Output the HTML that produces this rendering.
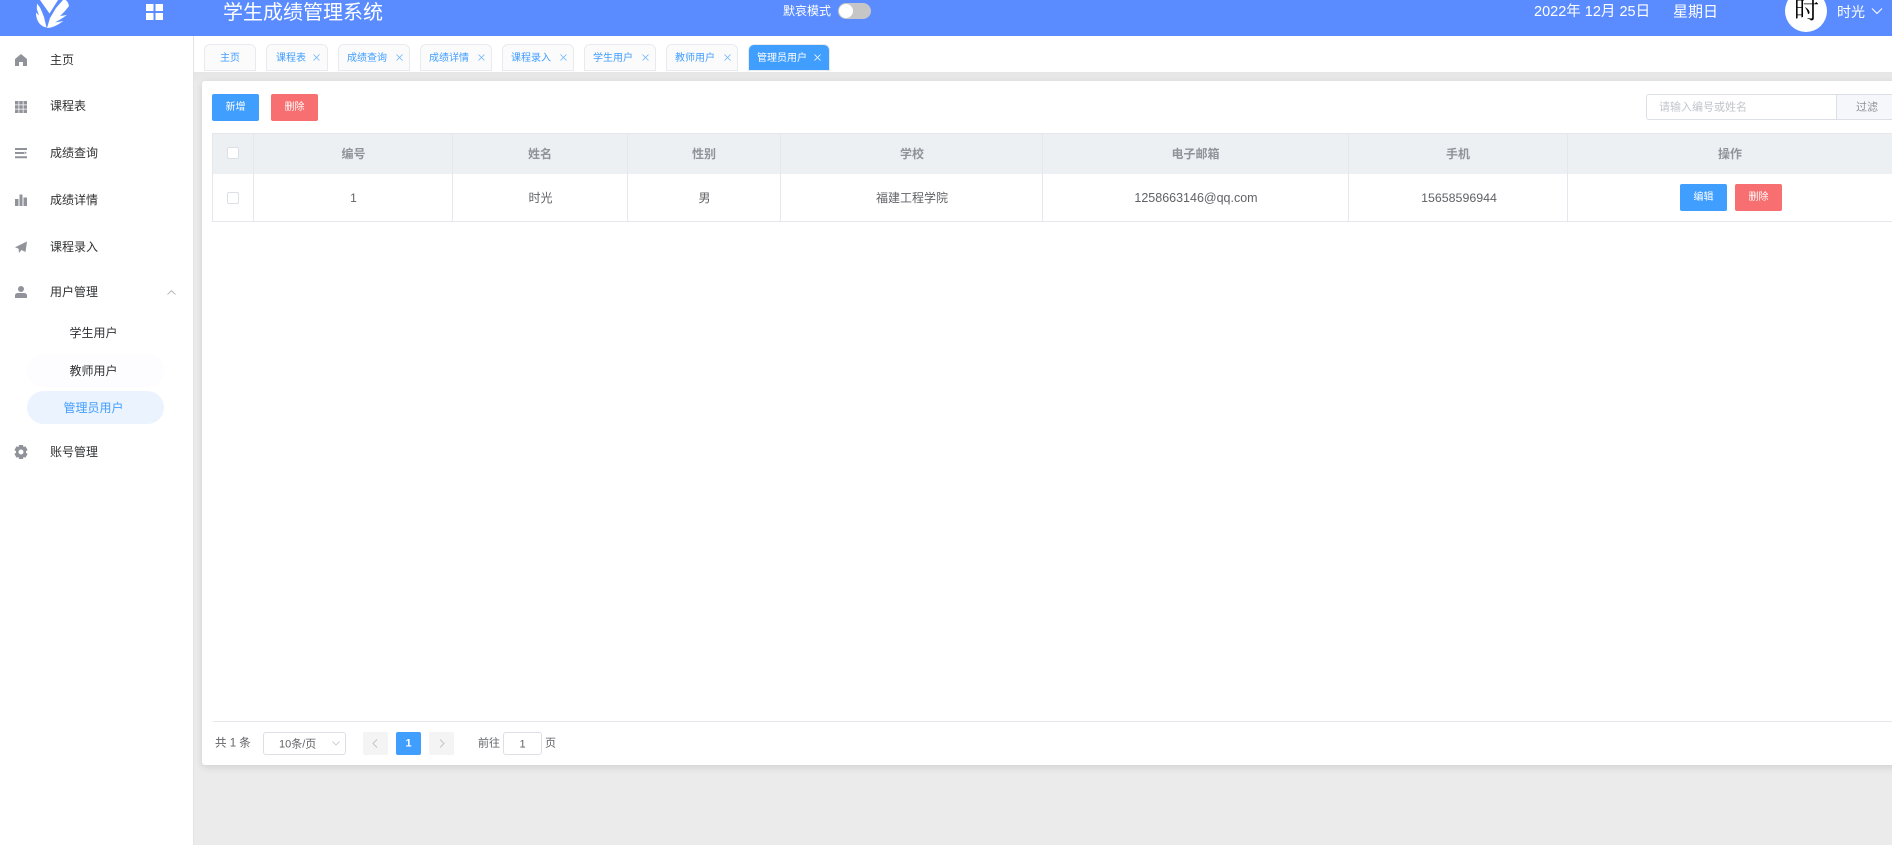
<!DOCTYPE html>
<html lang="zh-CN">
<head>
<meta charset="utf-8">
<title>学生成绩管理系统</title>
<style>
html,body{margin:0;padding:0;width:1892px;height:845px;overflow:hidden;background:#ebebeb}
body{position:relative;font-family:"Liberation Sans","Noto Sans CJK SC",sans-serif;font-size:12px;color:#606266}
.a{position:absolute}
.t{position:absolute;white-space:nowrap;line-height:1}
.c{text-align:center;transform:translateX(-50%)}
.m{transform:translateY(-50%)}
.cm{transform:translate(-50%,-50%)}
#hd{left:0;top:0;width:1892px;height:36px;background:#5a8cff;overflow:hidden;color:#fff}
#sd{left:0;top:36px;width:193px;height:809px;background:#fff;border-right:1px solid #e3e3e3;box-sizing:content-box}
.mi{position:absolute;left:50px;font-size:12px;color:#303133;line-height:1;white-space:nowrap;transform:translateY(-50%)}
.ic{position:absolute;left:15px;width:12px;height:12px;fill:#909399}
#tb{left:194px;top:36px;width:1698px;height:36px;background:#fff}
.tab{position:absolute;top:44px;height:27px;box-sizing:border-box;border:1px solid #e8eaef;border-bottom-width:1px;border-radius:6px 6px 0 0;background:#fbfbfc;color:#409eff;font-size:10px;line-height:27px;white-space:nowrap}
.tab span{position:absolute;top:0}
.tab svg{position:absolute;top:8.5px;width:7px;height:7px;stroke:#409eff;stroke-width:.8;fill:none;opacity:.75}
.act{background:#409eff;color:#fff;border-color:#e8eaef}
.act svg{stroke:#fff;opacity:1}
#band{left:194px;top:72px;width:1698px;height:9px;background:linear-gradient(#e6e6e6,#e9e9e9)}
#card{left:202px;top:81px;width:1700px;height:684px;background:#fff;border-radius:3px;box-shadow:0 2px 8px rgba(0,0,0,.12)}
.btn{position:absolute;width:47px;height:27px;border-radius:2px;color:#fff;font-size:10px;line-height:28px;text-align:center}
.bl{background:#409eff}.rd{background:#f76f70}
.th{background:#edf0f3}
.ln{position:absolute;background:#e5e7ec}
.hx{position:absolute;top:153.5px;font-size:12px;font-weight:bold;color:#909399;line-height:1;white-space:nowrap;transform:translate(-50%,-50%)}
.td{position:absolute;top:198px;font-size:12px;color:#606266;line-height:1;white-space:nowrap;transform:translate(-50%,-50%)}
.cb{position:absolute;left:227px;width:12px;height:12px;box-sizing:border-box;border:1px solid #dcdfe6;border-radius:2px;background:#fff}
.pg{position:absolute;top:732px;width:25px;height:23px;border-radius:2px;background:#f4f4f5}
</style>
</head>
<body>

<div id="hd" class="a">
  <svg class="a" style="left:30px;top:0" width="45" height="32" viewBox="0 0 45 32" fill="#fff">
    <path d="M10,0H28L19.5,13.5Z"/>
    <path d="M7,3.5L10,7.5L12,12L14,17L16.5,27.5C10.5,26.5 6,21 6,12.5L9,15.5L6.8,9Z"/>
    <path d="M33,0L26,8L20,18L17,28C20.5,28 24.5,26.5 28,24.5L33.5,21L25,22.5L31,19L37,15L30,16L35,11L39,6C38.5,3.5 37.5,1 35.5,0Z"/>
  </svg>
  <svg class="a" style="left:146px;top:4px" width="17" height="16" viewBox="0 0 17 16" fill="#fff">
    <rect x="0" y="0" width="7.5" height="7"/><rect x="9.5" y="0" width="7.5" height="7"/>
    <rect x="0" y="9" width="7.5" height="7"/><rect x="9.5" y="9" width="7.5" height="7"/>
  </svg>
  <div class="t m" style="left:223px;top:13px;font-size:20px">学生成绩管理系统</div>
  <div class="t m" style="left:783px;top:10.5px;font-size:12px">默哀模式</div>
  <div class="a" style="left:838px;top:3px;width:33px;height:16px;border-radius:8px;background:#c6c6c6"></div>
  <div class="a" style="left:839px;top:4px;width:14px;height:14px;border-radius:50%;background:#fff"></div>
  <div class="t m" style="left:1534px;top:12px;font-size:14.5px">2022年 12月 25日</div>
  <div class="t m" style="left:1673px;top:12px;font-size:15px">星期日</div>
  <div class="a" style="left:1785px;top:-10px;width:42px;height:42px;border-radius:50%;background:#fff"></div>
  <div class="t cm" style="left:1806.5px;top:11px;font-size:25px;color:#000;font-family:'Liberation Serif','Noto Serif CJK SC',serif">时</div>
  <div class="t m" style="left:1837px;top:12px;font-size:14px">时光</div>
  <svg class="a" style="left:1871px;top:7px" width="12" height="8" viewBox="0 0 12 8" fill="none" stroke="#fff" stroke-width="1"><path d="M1,1.5L6,6.5L11,1.5"/></svg>
</div>

<div id="sd" class="a"></div>
<svg class="ic" style="top:54px" viewBox="0 0 12 12"><path d="M6,0L12,5V12H8V8H4V12H0V5Z"/></svg>
<div class="mi" style="top:60px">主页</div>
<svg class="ic" style="top:101px" viewBox="0 0 12 12"><path d="M0,0H3.5V3.5H0ZM4.25,0H7.75V3.5H4.25ZM8.5,0H12V3.5H8.5ZM0,4.25H3.5V7.75H0ZM4.25,4.25H7.75V7.75H4.25ZM8.5,4.25H12V7.75H8.5ZM0,8.5H3.5V12H0ZM4.25,8.5H7.75V12H4.25ZM8.5,8.5H12V12H8.5Z"/></svg>
<div class="mi" style="top:106px">课程表</div>
<svg class="ic" style="top:147px" viewBox="0 0 12 12"><path d="M0,1H12V3H0ZM0,5H9V7H0ZM0,9.2H12V11.2H0ZM9.5,4.5L12,5.9L9.5,7.3Z"/></svg>
<div class="mi" style="top:153px">成绩查询</div>
<svg class="ic" style="top:194px" viewBox="0 0 12 12"><path d="M0,5H3.5V12H0ZM4.5,0.5H7.5V12H4.5ZM8.5,3.5H12V12H8.5Z"/></svg>
<div class="mi" style="top:200px">成绩详情</div>
<svg class="ic" style="top:241px" viewBox="0 0 12 12"><path d="M12,0.5L10.5,11L6.5,9L4,12L3.6,7.8L0,6.2Z"/></svg>
<div class="mi" style="top:247px">课程录入</div>
<svg class="ic" style="top:286px" viewBox="0 0 12 12"><circle cx="6" cy="3" r="3"/><path d="M0,12V9.5C0,7.5 2,7 3,7H9C10,7 12,7.5 12,9.5V12Z"/></svg>
<div class="mi" style="top:292px">用户管理</div>
<svg class="a" style="left:167px;top:290px" width="9" height="5" viewBox="0 0 9 5" fill="none" stroke="#a4a7ad" stroke-width=".8"><path d="M.5,4.5L4.5,.7L8.5,4.5"/></svg>
<div class="t cm" style="left:93.5px;top:333px;color:#303133">学生用户</div>
<div class="a" style="left:27px;top:354px;width:137px;height:33px;border-radius:16px;background:#fdfdff"></div>
<div class="t cm" style="left:93.5px;top:371px;color:#303133">教师用户</div>
<div class="a" style="left:27px;top:391px;width:137px;height:33px;border-radius:16.5px;background:#ebf3ff"></div>
<div class="t cm" style="left:93.5px;top:408px;color:#409eff">管理员用户</div>
<svg class="ic" style="top:445px;left:14px;width:14px;height:14px" viewBox="0 0 14 14"><path fill-rule="evenodd" d="M5,0H9L9.5,2L11.5,1.4L13.6,5L12,6.3V7.7L13.6,9L11.5,12.6L9.5,12L9,14H5L4.5,12L2.5,12.6L.4,9L2,7.7V6.3L.4,5L2.5,1.4L4.5,2ZM7,4.5A2.5,2.5 0 1 0 7,9.5A2.5,2.5 0 1 0 7,4.5Z"/></svg>
<div class="mi" style="top:452px">账号管理</div>

<div id="tb" class="a"></div>
<div class="tab" style="left:204px;width:52px"><span style="left:15px">主页</span></div>
<div class="tab" style="left:266px;width:62px"><span style="left:9px">课程表</span><svg style="left:45.5px" viewBox="0 0 7 7"><path d="M.5,.5L6.5,6.5M6.5,.5L.5,6.5"/></svg></div>
<div class="tab" style="left:338px;width:72px"><span style="left:8px">成绩查询</span><svg style="left:56.5px" viewBox="0 0 7 7"><path d="M.5,.5L6.5,6.5M6.5,.5L.5,6.5"/></svg></div>
<div class="tab" style="left:420px;width:72px"><span style="left:8px">成绩详情</span><svg style="left:56.5px" viewBox="0 0 7 7"><path d="M.5,.5L6.5,6.5M6.5,.5L.5,6.5"/></svg></div>
<div class="tab" style="left:502px;width:72px"><span style="left:8px">课程录入</span><svg style="left:56.5px" viewBox="0 0 7 7"><path d="M.5,.5L6.5,6.5M6.5,.5L.5,6.5"/></svg></div>
<div class="tab" style="left:584px;width:72px"><span style="left:8px">学生用户</span><svg style="left:56.5px" viewBox="0 0 7 7"><path d="M.5,.5L6.5,6.5M6.5,.5L.5,6.5"/></svg></div>
<div class="tab" style="left:666px;width:72px"><span style="left:8px">教师用户</span><svg style="left:56.5px" viewBox="0 0 7 7"><path d="M.5,.5L6.5,6.5M6.5,.5L.5,6.5"/></svg></div>
<div class="tab act" style="left:748px;width:82px"><span style="left:8px">管理员用户</span><svg style="left:65px" viewBox="0 0 7 7"><path d="M.5,.5L6.5,6.5M6.5,.5L.5,6.5"/></svg></div>

<div id="band" class="a"></div>
<div id="card" class="a"></div>

<div class="btn bl" style="left:212px;top:94px">新增</div>
<div class="btn rd" style="left:271px;top:94px">删除</div>

<div class="a" style="left:1646px;top:94px;width:191px;height:26px;box-sizing:border-box;border:1px solid #dcdfe6;border-radius:3px 0 0 3px;background:#fff"></div>
<div class="t m" style="left:1659px;top:108px;font-size:11px;color:#c0c4cc">请输入编号或姓名</div>
<div class="a" style="left:1837px;top:94px;width:60px;height:26px;box-sizing:border-box;border:1px solid #dcdfe6;border-left:0;background:#f5f7fa"></div>
<div class="t cm" style="left:1867px;top:108px;font-size:11px;color:#909399">过滤</div>

<div class="a th" style="left:212px;top:133px;width:1680px;height:41px"></div>
<div class="ln" style="left:212px;top:133px;width:1680px;height:1px"></div>
<div class="ln" style="left:212px;top:221px;width:1680px;height:1px"></div>
<div class="ln" style="left:212px;top:133px;width:1px;height:89px"></div>
<div class="ln" style="left:253px;top:133px;width:1px;height:89px"></div>
<div class="ln" style="left:452px;top:133px;width:1px;height:89px"></div>
<div class="ln" style="left:627px;top:133px;width:1px;height:89px"></div>
<div class="ln" style="left:780px;top:133px;width:1px;height:89px"></div>
<div class="ln" style="left:1042px;top:133px;width:1px;height:89px"></div>
<div class="ln" style="left:1348px;top:133px;width:1px;height:89px"></div>
<div class="ln" style="left:1567px;top:133px;width:1px;height:89px"></div>

<div class="cb" style="top:147px"></div>
<div class="hx" style="left:353.5px">编号</div>
<div class="hx" style="left:540px">姓名</div>
<div class="hx" style="left:704px">性别</div>
<div class="hx" style="left:912px">学校</div>
<div class="hx" style="left:1195.5px">电子邮箱</div>
<div class="hx" style="left:1458px">手机</div>
<div class="hx" style="left:1730px">操作</div>

<div class="cb" style="top:192px"></div>
<div class="td" style="left:353.5px">1</div>
<div class="td" style="left:540.5px">时光</div>
<div class="td" style="left:704.5px">男</div>
<div class="td" style="left:912px">福建工程学院</div>
<div class="td" style="left:1196px;font-size:12.5px">1258663146@qq.com</div>
<div class="td" style="left:1459px;font-size:12.4px">15658596944</div>
<div class="btn bl" style="left:1680px;top:184px">编辑</div>
<div class="btn rd" style="left:1735px;top:184px">删除</div>

<div class="ln" style="left:213px;top:721px;width:1679px;height:1px"></div>
<div class="t m" style="left:215px;top:744px;font-size:11.5px">共 1 条</div>
<div class="a" style="left:263px;top:732px;width:83px;height:23px;box-sizing:border-box;border:1px solid #dcdfe6;border-radius:3px;background:#fff"></div>
<div class="t m" style="left:279px;top:744.5px;font-size:11px">10条/页</div>
<svg class="a" style="left:332px;top:741px" width="8" height="5" viewBox="0 0 8 5" fill="none" stroke="#c0c4cc" stroke-width=".8"><path d="M.5,.5L4,4L7.5,.5"/></svg>
<div class="pg" style="left:363px"></div>
<svg class="a" style="left:372px;top:739px" width="6" height="9" viewBox="0 0 6 9" fill="none" stroke="#c0c4cc" stroke-width="1"><path d="M5,.5L1,4.5L5,8.5"/></svg>
<div class="pg" style="left:396px;background:#409eff"></div>
<div class="t cm" style="left:408.5px;top:744px;font-size:11px;font-weight:bold;color:#fff">1</div>
<div class="pg" style="left:429px"></div>
<svg class="a" style="left:439px;top:739px" width="6" height="9" viewBox="0 0 6 9" fill="none" stroke="#c0c4cc" stroke-width="1"><path d="M1,.5L5,4.5L1,8.5"/></svg>
<div class="t m" style="left:478px;top:744px;font-size:11px">前往</div>
<div class="a" style="left:503px;top:732px;width:39px;height:23px;box-sizing:border-box;border:1px solid #dcdfe6;border-radius:3px;background:#fff"></div>
<div class="t cm" style="left:522.5px;top:744.5px;font-size:11px">1</div>
<div class="t m" style="left:545px;top:744px;font-size:11px">页</div>

</body>
</html>
